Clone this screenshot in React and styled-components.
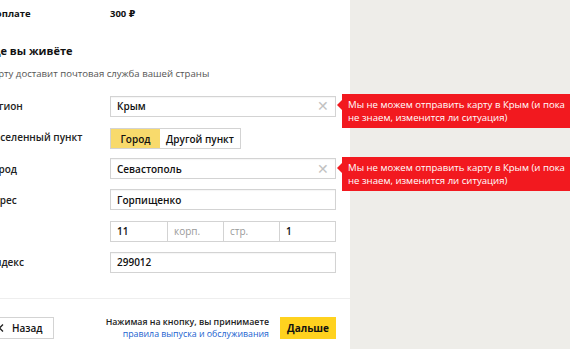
import styled, { createGlobalStyle } from "styled-components";

const GlobalStyle = createGlobalStyle`
  body {
    margin: 0;
    background: #eeede9;
    font-family: "Open Sans", "DejaVu Sans", sans-serif;
    color: #111;
  }
`;

const Page = styled.div`
  display: flex;
  min-height: 100vh;
  overflow: hidden;
`;

const Panel = styled.div`
  width: 350px;
  flex-shrink: 0;
  background: #fff;
`;

const Inner = styled.div`
  margin-left: -13px;
  padding-top: 7px;
  width: 349px;
`;

const SumRow = styled.div`
  display: grid;
  grid-template-columns: 123px 1fr;
  font-size: 9.5px;
  line-height: 14px;
  font-weight: 700;
`;

const Title = styled.h2`
  margin: 22px 0 0;
  font-size: 11px;
  line-height: 16px;
  font-weight: 700;
`;

const Subtitle = styled.p`
  margin: 8px 0 0;
  font-size: 9.6px;
  line-height: 14px;
  color: #555;
`;

const Form = styled.div`
  margin-top: 14.5px;
  display: grid;
  grid-template-columns: 123px 226px;
  grid-auto-rows: 21px;
  row-gap: 10.3px;
  align-items: center;
`;

const Label = styled.div`
  font-size: 10px;
  font-weight: 600;
  color: #222;
`;

const Field = styled.div`
  position: relative;
  height: 21px;
`;

const Input = styled.div`
  box-sizing: border-box;
  height: 100%;
  display: flex;
  align-items: center;
  justify-content: space-between;
  padding: 0 6px;
  border: 1px solid #d3d3d3;
  box-shadow: inset 0 1px 1px rgba(0, 0, 0, 0.04);
  font-size: 10px;
  font-weight: 600;
  color: #111;
`;

const Clear = styled.span`
  color: #c2c2c2;
  font-size: 14px;
  font-weight: 300;
  line-height: 1;
`;

const Tooltip = styled.div`
  position: absolute;
  top: -1.5px;
  left: calc(100% + 6px);
  width: 230px;
  box-sizing: border-box;
  padding: 4px 6px;
  background: #f2191f;
  color: #fff;
  font-size: 9.6px;
  line-height: 13px;
  &::before {
    content: "";
    position: absolute;
    left: -5px;
    top: 6px;
    border-top: 5px solid transparent;
    border-bottom: 5px solid transparent;
    border-right: 5px solid #f2191f;
  }
`;

const Toggle = styled.div`
  display: inline-flex;
  height: 21px;
  border: 1px solid #d3d3d3;
  box-sizing: border-box;
  width: 131px;
`;

const ToggleItem = styled.div`
  display: flex;
  align-items: center;
  justify-content: center;
  width: ${(p) => p.$w}px;
  font-size: 10px;
  font-weight: 600;
  background: ${(p) => (p.$active ? "#f8da6c" : "#fff")};
`;

const Split = styled.div`
  display: grid;
  grid-template-columns: repeat(4, 1fr);
  height: 21px;
  border: 1px solid #d3d3d3;
  box-sizing: border-box;
`;

const Cell = styled.div`
  display: flex;
  align-items: center;
  padding: 0 6px;
  font-size: 10px;
  font-weight: ${(p) => (p.$placeholder ? 400 : 600)};
  color: ${(p) => (p.$placeholder ? "#9a9a9a" : "#111")};
  & + & {
    border-left: 1px solid #d3d3d3;
  }
`;

const Footer = styled.div`
  margin-top: 25px;
  margin-left: -13px;
  padding: 17px 14px 0 0;
  border-top: 1px solid #eeeeee;
  display: flex;
  align-items: center;
  justify-content: space-between;
  width: 363px;
  box-sizing: border-box;
`;

const BackButton = styled.div`
  display: flex;
  align-items: center;
  gap: 8px;
  height: 22px;
  box-sizing: border-box;
  padding: 0 10px 0 10px;
  border: 1px solid #d3d3d3;
  font-size: 10px;
  font-weight: 600;
`;

const Right = styled.div`
  display: flex;
  align-items: center;
  gap: 11px;
`;

const Note = styled.div`
  text-align: right;
  font-size: 8.8px;
  line-height: 12px;
  font-weight: 600;
  color: #222;
`;

const Link = styled.span`
  color: #1a5fcf;
  font-weight: 400;
`;

const NextButton = styled.div`
  width: 56px;
  height: 22px;
  display: flex;
  align-items: center;
  justify-content: center;
  background: #ffd21f;
  font-size: 10px;
  font-weight: 700;
`;

const TIP = "Мы не можем отправить карту в Крым (и пока не знаем, изменится ли ситуация)";

const App = () => {
  return (
    <Page>
      <GlobalStyle />
      <Panel>
        <Inner>
          <SumRow>
            <span>К оплате</span>
            <span>300 ₽</span>
          </SumRow>
          <Title>Где вы живёте</Title>
          <Subtitle>Карту доставит почтовая служба вашей страны</Subtitle>
          <Form>
            <Label>Регион</Label>
            <Field>
              <Input>
                Крым <Clear>✕</Clear>
              </Input>
              <Tooltip>{TIP}</Tooltip>
            </Field>

            <Label>Населенный пункт</Label>
            <div>
              <Toggle>
                <ToggleItem $active $w={49}>Город</ToggleItem>
                <ToggleItem $w={80}>Другой пункт</ToggleItem>
              </Toggle>
            </div>

            <Label>Город</Label>
            <Field>
              <Input>
                Севастополь <Clear>✕</Clear>
              </Input>
              <Tooltip>{TIP}</Tooltip>
            </Field>

            <Label>Адрес</Label>
            <Field>
              <Input>Горпищенко</Input>
            </Field>

            <Label />
            <Split>
              <Cell>11</Cell>
              <Cell $placeholder>корп.</Cell>
              <Cell $placeholder>стр.</Cell>
              <Cell>1</Cell>
            </Split>

            <Label>Индекс</Label>
            <Field>
              <Input>299012</Input>
            </Field>
          </Form>
        </Inner>
        <Footer>
          <BackButton>
            <svg width="6" height="8" viewBox="0 0 6 8">
              <path d="M5 0.5 L1.5 4 L5 7.5" stroke="#222" strokeWidth="1.3" fill="none" />
            </svg>
            Назад
          </BackButton>
          <Right>
            <Note>
              Нажимая на кнопку, вы принимаете
              <br />
              <Link>правила выпуска и обслуживания</Link>
            </Note>
            <NextButton>Дальше</NextButton>
          </Right>
        </Footer>
      </Panel>
    </Page>
  );
};

export default App;
